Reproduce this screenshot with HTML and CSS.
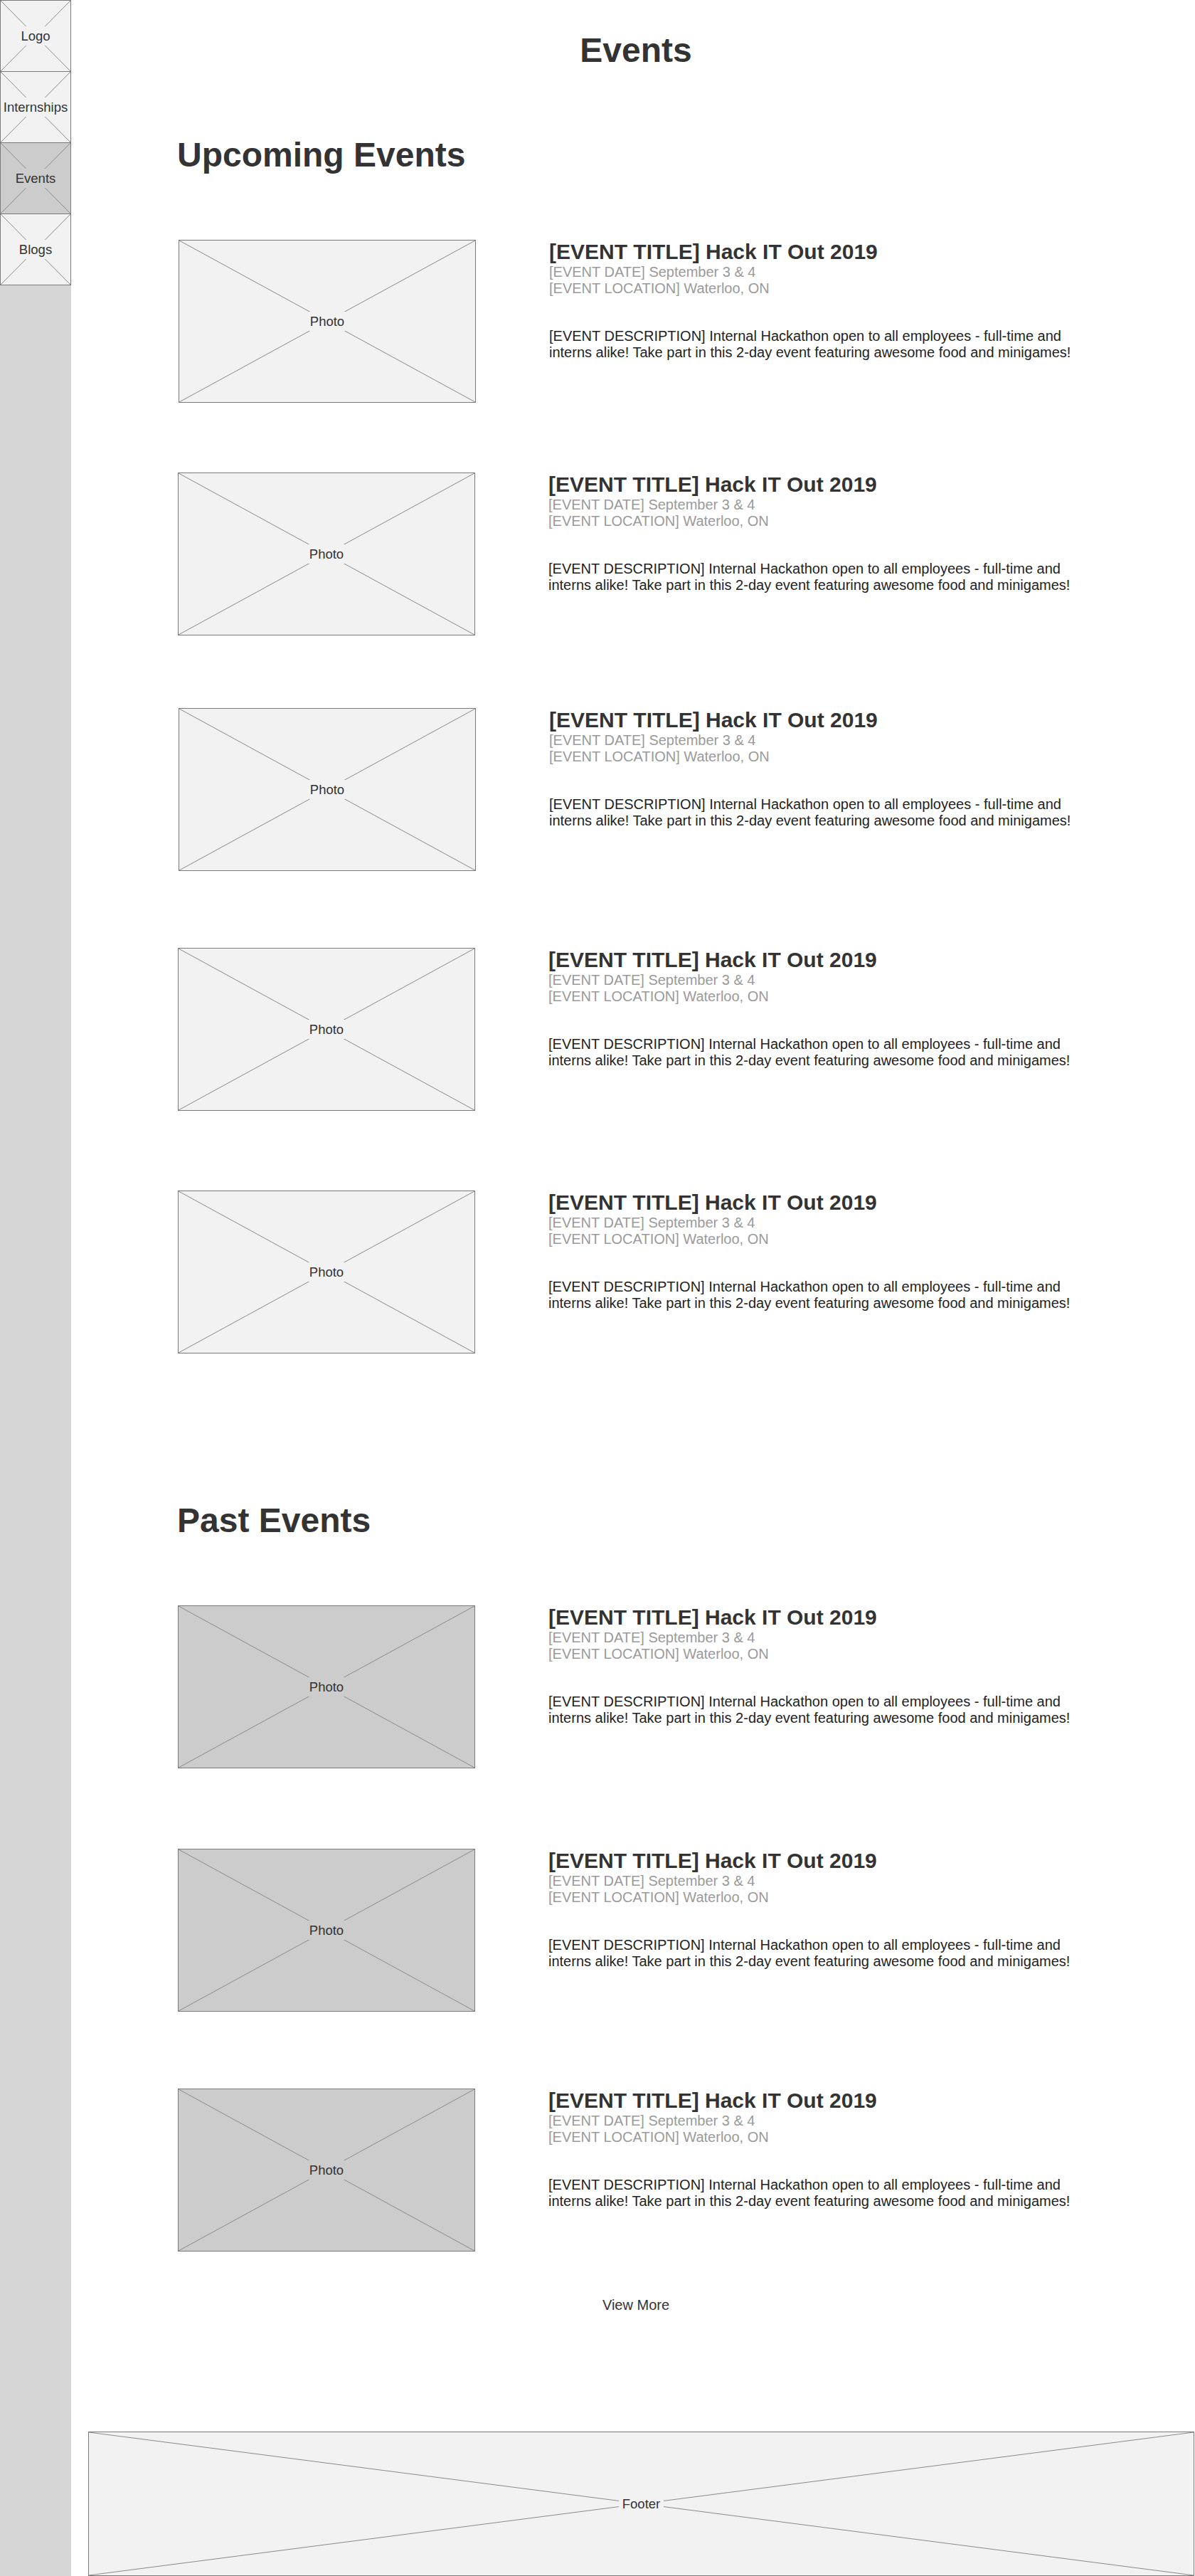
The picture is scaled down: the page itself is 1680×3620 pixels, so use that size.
FILE: index.html
```html
<!DOCTYPE html>
<html lang="en">
<head>
<meta charset="utf-8">
<title>Events</title>
<link rel="stylesheet" href="styles.css">
</head>
<body>
<div class="page">
  <nav class="sidebar">
    <a class="nav-item ph"><svg class="ph-x" viewBox="0 0 100 100" preserveAspectRatio="none"><line x1="0" y1="0" x2="100" y2="100"/><line x1="100" y1="0" x2="0" y2="100"/></svg><span class="ph-label">Logo</span></a>
    <a class="nav-item ph"><svg class="ph-x" viewBox="0 0 100 100" preserveAspectRatio="none"><line x1="0" y1="0" x2="100" y2="100"/><line x1="100" y1="0" x2="0" y2="100"/></svg><span class="ph-label">Internships</span></a>
    <a class="nav-item ph active"><svg class="ph-x" viewBox="0 0 100 100" preserveAspectRatio="none"><line x1="0" y1="0" x2="100" y2="100"/><line x1="100" y1="0" x2="0" y2="100"/></svg><span class="ph-label">Events</span></a>
    <a class="nav-item ph"><svg class="ph-x" viewBox="0 0 100 100" preserveAspectRatio="none"><line x1="0" y1="0" x2="100" y2="100"/><line x1="100" y1="0" x2="0" y2="100"/></svg><span class="ph-label">Blogs</span></a>
  </nav>

  <main class="main">
    <h1 class="page-title">Events</h1>

    <section class="section upcoming">
      <h2 class="section-title">Upcoming Events</h2>
      <div class="event-list">
        <article class="event">
          <div class="photo ph"><svg class="ph-x" viewBox="0 0 100 100" preserveAspectRatio="none"><line x1="0" y1="0" x2="100" y2="100"/><line x1="100" y1="0" x2="0" y2="100"/></svg><span class="ph-label">Photo</span></div>
          <div class="event-info">
            <h3 class="event-title">[EVENT TITLE] Hack IT Out 2019</h3>
            <p class="event-meta">[EVENT DATE] September 3 &amp; 4<br>[EVENT LOCATION] Waterloo, ON</p>
            <p class="event-desc">[EVENT DESCRIPTION] Internal Hackathon open to all employees - full-time and interns alike! Take part in this 2-day event featuring awesome food and minigames!</p>
          </div>
        </article>
        <article class="event">
          <div class="photo ph"><svg class="ph-x" viewBox="0 0 100 100" preserveAspectRatio="none"><line x1="0" y1="0" x2="100" y2="100"/><line x1="100" y1="0" x2="0" y2="100"/></svg><span class="ph-label">Photo</span></div>
          <div class="event-info">
            <h3 class="event-title">[EVENT TITLE] Hack IT Out 2019</h3>
            <p class="event-meta">[EVENT DATE] September 3 &amp; 4<br>[EVENT LOCATION] Waterloo, ON</p>
            <p class="event-desc">[EVENT DESCRIPTION] Internal Hackathon open to all employees - full-time and interns alike! Take part in this 2-day event featuring awesome food and minigames!</p>
          </div>
        </article>
        <article class="event">
          <div class="photo ph"><svg class="ph-x" viewBox="0 0 100 100" preserveAspectRatio="none"><line x1="0" y1="0" x2="100" y2="100"/><line x1="100" y1="0" x2="0" y2="100"/></svg><span class="ph-label">Photo</span></div>
          <div class="event-info">
            <h3 class="event-title">[EVENT TITLE] Hack IT Out 2019</h3>
            <p class="event-meta">[EVENT DATE] September 3 &amp; 4<br>[EVENT LOCATION] Waterloo, ON</p>
            <p class="event-desc">[EVENT DESCRIPTION] Internal Hackathon open to all employees - full-time and interns alike! Take part in this 2-day event featuring awesome food and minigames!</p>
          </div>
        </article>
        <article class="event">
          <div class="photo ph"><svg class="ph-x" viewBox="0 0 100 100" preserveAspectRatio="none"><line x1="0" y1="0" x2="100" y2="100"/><line x1="100" y1="0" x2="0" y2="100"/></svg><span class="ph-label">Photo</span></div>
          <div class="event-info">
            <h3 class="event-title">[EVENT TITLE] Hack IT Out 2019</h3>
            <p class="event-meta">[EVENT DATE] September 3 &amp; 4<br>[EVENT LOCATION] Waterloo, ON</p>
            <p class="event-desc">[EVENT DESCRIPTION] Internal Hackathon open to all employees - full-time and interns alike! Take part in this 2-day event featuring awesome food and minigames!</p>
          </div>
        </article>
        <article class="event">
          <div class="photo ph"><svg class="ph-x" viewBox="0 0 100 100" preserveAspectRatio="none"><line x1="0" y1="0" x2="100" y2="100"/><line x1="100" y1="0" x2="0" y2="100"/></svg><span class="ph-label">Photo</span></div>
          <div class="event-info">
            <h3 class="event-title">[EVENT TITLE] Hack IT Out 2019</h3>
            <p class="event-meta">[EVENT DATE] September 3 &amp; 4<br>[EVENT LOCATION] Waterloo, ON</p>
            <p class="event-desc">[EVENT DESCRIPTION] Internal Hackathon open to all employees - full-time and interns alike! Take part in this 2-day event featuring awesome food and minigames!</p>
          </div>
        </article>
      </div>
    </section>

    <section class="section past">
      <h2 class="section-title">Past Events</h2>
      <div class="event-list">
        <article class="event">
          <div class="photo ph past-photo"><svg class="ph-x" viewBox="0 0 100 100" preserveAspectRatio="none"><line x1="0" y1="0" x2="100" y2="100"/><line x1="100" y1="0" x2="0" y2="100"/></svg><span class="ph-label">Photo</span></div>
          <div class="event-info">
            <h3 class="event-title">[EVENT TITLE] Hack IT Out 2019</h3>
            <p class="event-meta">[EVENT DATE] September 3 &amp; 4<br>[EVENT LOCATION] Waterloo, ON</p>
            <p class="event-desc">[EVENT DESCRIPTION] Internal Hackathon open to all employees - full-time and interns alike! Take part in this 2-day event featuring awesome food and minigames!</p>
          </div>
        </article>
        <article class="event">
          <div class="photo ph past-photo"><svg class="ph-x" viewBox="0 0 100 100" preserveAspectRatio="none"><line x1="0" y1="0" x2="100" y2="100"/><line x1="100" y1="0" x2="0" y2="100"/></svg><span class="ph-label">Photo</span></div>
          <div class="event-info">
            <h3 class="event-title">[EVENT TITLE] Hack IT Out 2019</h3>
            <p class="event-meta">[EVENT DATE] September 3 &amp; 4<br>[EVENT LOCATION] Waterloo, ON</p>
            <p class="event-desc">[EVENT DESCRIPTION] Internal Hackathon open to all employees - full-time and interns alike! Take part in this 2-day event featuring awesome food and minigames!</p>
          </div>
        </article>
        <article class="event">
          <div class="photo ph past-photo"><svg class="ph-x" viewBox="0 0 100 100" preserveAspectRatio="none"><line x1="0" y1="0" x2="100" y2="100"/><line x1="100" y1="0" x2="0" y2="100"/></svg><span class="ph-label">Photo</span></div>
          <div class="event-info">
            <h3 class="event-title">[EVENT TITLE] Hack IT Out 2019</h3>
            <p class="event-meta">[EVENT DATE] September 3 &amp; 4<br>[EVENT LOCATION] Waterloo, ON</p>
            <p class="event-desc">[EVENT DESCRIPTION] Internal Hackathon open to all employees - full-time and interns alike! Take part in this 2-day event featuring awesome food and minigames!</p>
          </div>
        </article>
      </div>
      <div class="view-more">View More</div>
    </section>

    <footer class="footer ph"><svg class="ph-x" viewBox="0 0 100 100" preserveAspectRatio="none"><line x1="0" y1="0" x2="100" y2="100"/><line x1="100" y1="0" x2="0" y2="100"/></svg><span class="ph-label">Footer</span></footer>
  </main>
</div>
</body>
</html>
```

FILE: styles.css
```css
* {
  box-sizing: border-box;
}

html, body {
  margin: 0;
  padding: 0;
  background: #ffffff;
}

body {
  font-family: "Liberation Sans", Arial, sans-serif;
  color: #333333;
}

.page {
  display: flex;
  min-height: 3620px;
}

/* ---------- placeholder (wireframe X box) ---------- */
.ph {
  position: relative;
  display: flex;
  align-items: center;
  justify-content: center;
  background: #f2f2f2;
  border: 1px solid #7a7a7a;
}

.ph-x {
  position: absolute;
  top: 0;
  left: 0;
  width: 100%;
  height: 100%;
}

.ph-x line {
  stroke: #8a8a8a;
  stroke-width: 1;
  vector-effect: non-scaling-stroke;
}

.ph-label {
  position: relative;
  background: inherit;
  padding: 4px 5px;
  line-height: 19px;
  font-size: 18.5px;
  color: #333333;
}

/* ---------- sidebar ---------- */
.sidebar {
  width: 100px;
  flex: 0 0 100px;
  background: #d6d6d6;
  display: flex;
  flex-direction: column;
}

.nav-item {
  height: 101px;
  margin-bottom: -1px;
  width: 100px;
}

.nav-item .ph-label {
  padding: 4px 2px;
  white-space: nowrap;
}

.nav-item.active {
  background: #cccccc;
}

/* ---------- main ---------- */
.main {
  flex: 1;
  display: flex;
  flex-direction: column;
  padding-top: 43px;
}

.page-title {
  margin: 0;
  padding-left: 8px;
  text-align: center;
  font-size: 48px;
  line-height: 55px;
  font-weight: bold;
  color: #333333;
}

.section {
  padding-left: 149px;
}

.section-title {
  margin: 0;
  font-size: 48px;
  line-height: 55px;
  font-weight: bold;
  color: #333333;
}

.upcoming .section-title {
  margin-top: 92px;
}

.past .section-title {
  margin-top: 207px;
}

.event-list {
  margin-top: 92px;
  display: flex;
  flex-direction: column;
}

.event {
  display: flex;
  align-items: flex-start;
  padding-left: 2px;
}

.upcoming .event:nth-child(2) { margin-top: 98px; }
.upcoming .event:nth-child(3) { margin-top: 102px; }
.upcoming .event:nth-child(4) { margin-top: 108px; }
.upcoming .event:nth-child(5) { margin-top: 112px; }
.past .event:nth-child(2) { margin-top: 113px; }
.past .event:nth-child(3) { margin-top: 108px; }

.upcoming .event:nth-child(even),
.upcoming .event:nth-child(5),
.past .event {
  padding-left: 1px;
}

.photo {
  width: 418px;
  height: 229px;
  flex: 0 0 418px;
}

.past-photo {
  background: #cccccc;
}

.event-info {
  margin-left: 103px;
  width: 770px;
}

.event-title {
  margin: 0;
  font-size: 30px;
  line-height: 34px;
  font-weight: bold;
  color: #333333;
}

.event-meta {
  margin: 0;
  font-size: 20px;
  line-height: 23px;
  color: #9a9a9a;
}

.event-desc {
  margin: 44px 0 0;
  font-size: 20px;
  line-height: 23px;
  color: #222222;
}

.view-more {
  margin-top: 64px;
  margin-left: -149px;
  text-align: center;
  font-size: 20px;
  line-height: 23px;
  color: #333333;
  padding-left: 8px;
}

/* ---------- footer ---------- */
.footer {
  margin-top: 166px;
  margin-left: 24px;
  margin-right: 1px;
  height: 203px;
}
```
